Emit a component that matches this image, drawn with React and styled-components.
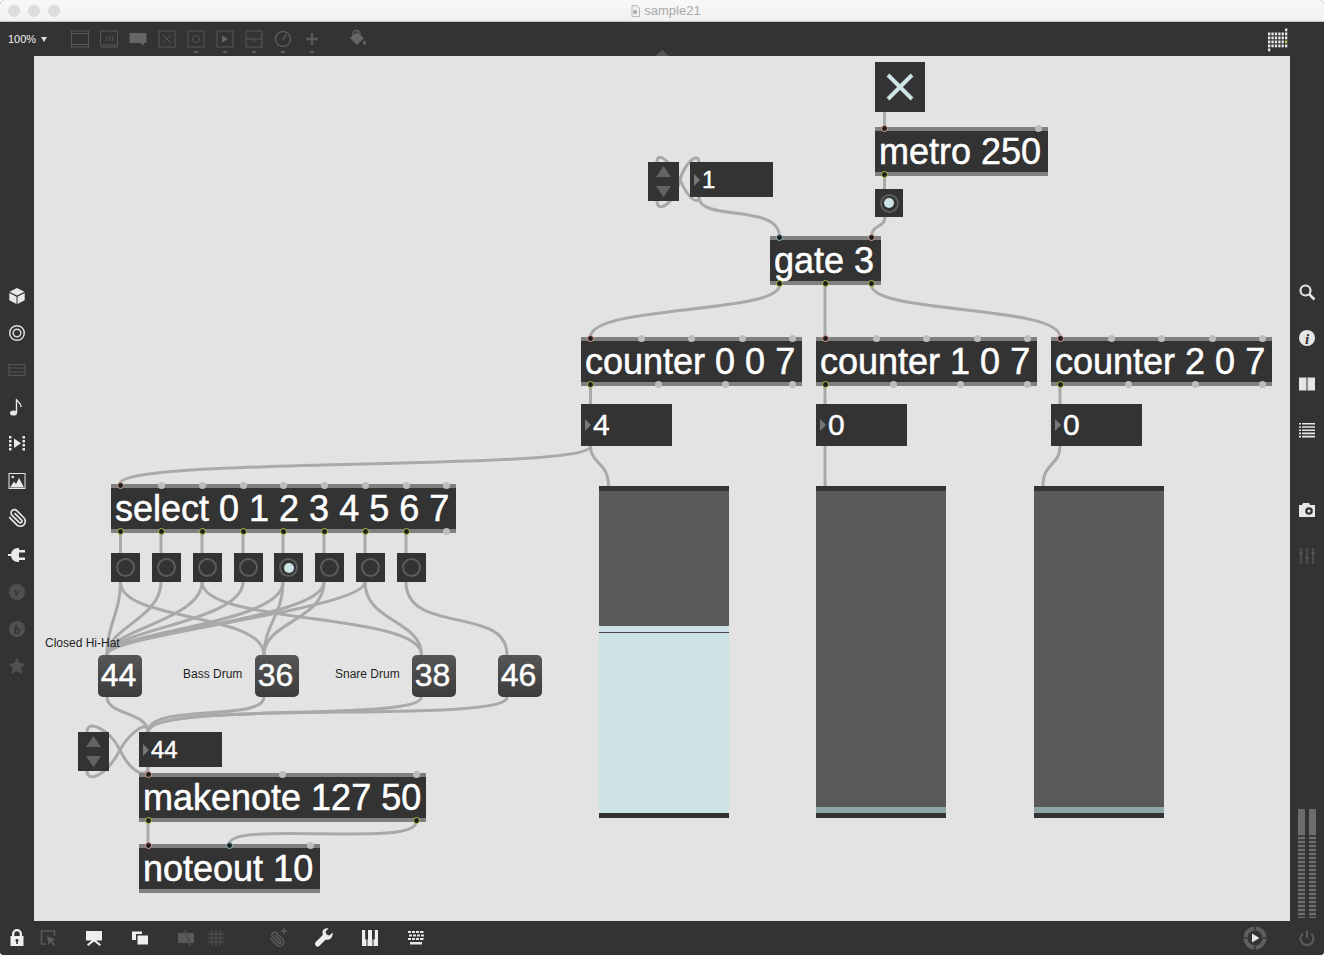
import React from "react";
import styled, { createGlobalStyle } from "styled-components";

const GlobalStyle = createGlobalStyle`
  html, body {
    margin: 0;
    background: #fff;
    font-family: "Liberation Sans", Arial, sans-serif;
  }
`;

// canvas origin in page coordinates, all nodes below are given in page coords
const OX = 34;
const OY = 56;

const CLIP = "m21.44 11.05-9.19 9.19a6 6 0 0 1-8.49-8.49l8.57-8.57A4 4 0 1 1 18 8.84l-8.59 8.57a2 2 0 0 1-2.83-2.83l8.49-8.48";

const DimLetter = styled.text`
  font-family: "Liberation Serif", serif;
  font-style: italic;
  font-weight: bold;
  font-size: 13px;
  fill: #333;
  stroke: none;
`;
const InfoLetter = styled(DimLetter)`
  font-size: 15px;
`;

const Glyph = ({ size = 20, children, ...rest }) => (
  <Svg width={size} height={size} viewBox="0 0 20 20" {...rest}>
    {children}
  </Svg>
);

const topTools = [
  { caret: false, icon: <><rect x="1.5" y="2" width="17" height="16" /><path d="M1.5 4.5h17M1.5 15.5h17" /></> },
  { caret: false, icon: <><rect x="1.5" y="2" width="17" height="14" /><path d="M7 12l1.5-5M10 12l1.5-5M13 12l1.5-5M1.5 18h17" /></> },
  { caret: false, icon: <path fill="#666" stroke="none" d="M1.5 4h17v10h-3v3l-3.5-3H1.5z" /> },
  { caret: false, icon: <><rect x="2" y="2" width="16" height="16" /><path d="M6 6l8 8M14 6l-8 8" /></> },
  { caret: true, icon: <><rect x="2" y="2" width="16" height="16" /><circle cx="10" cy="10" r="3.5" /></> },
  { caret: true, icon: <><rect x="2" y="2" width="16" height="16" /><path fill="#666" stroke="none" d="M7 6.5l6 3.5-6 3.5z" /></> },
  { caret: true, icon: <><rect x="2" y="2" width="16" height="16" /><path d="M2 10h16M10 10v3" /></> },
  { caret: true, icon: <><circle cx="10" cy="10" r="7.5" strokeWidth="1.5" /><path d="M10 10.5l3-5" strokeWidth="1.5" /></> },
  { caret: true, icon: <path strokeWidth="2.5" d="M10 4v12M4 10h12" /> },
];

const leftTools = [
  { tone: "#e8e8e8", icon: <path stroke="none" d="M10 2l7.5 3.7L10 9.4 2.5 5.7zM2.3 7l7.2 3.7V18l-7.2-3.7zM17.7 7l-7.2 3.7V18l7.2-3.7z" /> },
  { tone: "#dcdcdc", icon: <><circle cx="10" cy="10" r="7.3" fill="none" strokeWidth="1.5" /><circle cx="10" cy="10" r="3.8" fill="none" strokeWidth="1.5" /></> },
  { tone: "#555", icon: <><rect x="2" y="4.5" width="16" height="11" fill="none" strokeWidth="1.2" /><path d="M2 8h16M3 12h14" strokeWidth="1" /></> },
  { tone: "#e8e8e8", icon: <><ellipse cx="6.5" cy="16" rx="3.5" ry="2.6" stroke="none" /><path d="M9.5 16V2c.5 3 5 3.5 4.5 8" fill="none" strokeWidth="1.4" /></> },
  { tone: "#e8e8e8", icon: <path stroke="none" d="M2 2h2.5v2.5H2zM2 6h2.5v2.5H2zM2 10h2.5v2.5H2zM2 14h2.5v2.5H2zM15.5 2H18v2.5h-2.5zM15.5 6H18v2.5h-2.5zM15.5 10H18v2.5h-2.5zM15.5 14H18v2.5h-2.5zM7 4.5l7 4.8-7 4.8z" /> },
  { tone: "#e8e8e8", icon: <><rect x="2" y="2.5" width="16" height="15" fill="none" strokeWidth="1" /><circle cx="5.8" cy="6" r="1.3" stroke="none" /><path stroke="none" d="M3 16.5l4-6 2 2.5 3-6 5 9.5z" /></> },
  { tone: "#e8e8e8", icon: <g transform="translate(20 0) scale(-0.83 0.83)"><path fill="none" strokeWidth="2" d={CLIP} /></g> },
  { tone: "#eaeaea", icon: <path stroke="none" d="M1 9h3.5v2H1zM4 10c0-4 3-7 7-7h1v14h-1c-4 0-7-3-7-7zM12 5h6v2.5h-6zM12 12.5h6V15h-6z" /> },
  { tone: "#505050", icon: <><circle cx="10" cy="10" r="8" stroke="none" /><DimLetter x="10" y="14" textAnchor="middle">v</DimLetter></> },
  { tone: "#505050", icon: <><circle cx="10" cy="10" r="8" stroke="none" /><DimLetter x="10" y="15" textAnchor="middle">b</DimLetter></> },
  { tone: "#505050", icon: <path stroke="none" d="M10 1.5l2.6 5.6 6.1.7-4.5 4.2 1.2 6L10 15l-5.4 3 1.2-6-4.5-4.2 6.1-.7z" /> },
];

const rightTools = [
  { tone: "#e6e6e6", icon: <><circle cx="8.5" cy="8.5" r="5" fill="none" strokeWidth="2.2" /><path d="M12.5 12.5l5 5" strokeWidth="2.5" fill="none" /></> },
  { tone: "#e6e6e6", icon: <><circle cx="10" cy="10" r="8" stroke="none" /><InfoLetter x="10" y="15.5" textAnchor="middle">i</InfoLetter></> },
  { tone: "#e6e6e6", icon: <path stroke="none" d="M2 3.5h7.500v13H2zM10.500 3.500H18v13h-7.500z" /> },
  { tone: "#e6e6e6", icon: <path stroke="none" d="M2 3h2v1.6H2zM5 3h13v1.6H5zM2 6.2h2v1.6H2zM5 6.2h13v1.6H5zM2 9.4h2V11H2zM5 9.4h13V11H5zM2 12.6h2v1.6H2zM5 12.6h13v1.6H5zM2 15.8h2v1.6H2zM5 15.8h13v1.6H5z" /> },
  { tone: "#e6e6e6", spaced: true, icon: <><path stroke="none" fillRule="evenodd" d="M2 5h3l1-2h6l1 2h5v12H2zM12 7.2a3.8 3.8 0 1 0 0 7.6 3.8 3.8 0 0 0 0-7.6z" /><circle cx="12" cy="11" r="1.5" stroke="none" /></> },
  { tone: "#555", icon: <path strokeWidth="1.5" fill="none" d="M4 2v16M10 2v16M16 2v16M2 7h4M8 12h4M14 7h4" /> },
];

const bottomTools = [
  { after: 1, tone: "#eee", icon: <path stroke="none" fillRule="evenodd" d="M5 8V6a5 5 0 0 1 10 0v2h1.5v10h-13V8zM7.3 8h5.4V6a2.7 2.7 0 0 0-5.4 0zM10 11a1.5 1.5 0 0 0-.8 2.8V16h1.6v-2.200A1.5 1.5 0 0 0 10 11z" /> },
  { after: 16, tone: "#5a5a5a", icon: <><path fill="none" strokeWidth="1.6" d="M16.5 8V3h-13v13H8" /><path stroke="none" d="M9 8l8.5 3.5-3.5 1.5 3 4-1.5 1-3-4-2 2.5z" /></> },
  { after: 16, tone: "#eee", icon: <path stroke="none" d="M2 3h16v9.5h-5.8L17 16.5 15.8 18 10 13.5 4.2 18 3 16.5l4.8-4H2z" /> },
  { after: 16, tone: "#eee", icon: <path stroke="none" fillRule="evenodd" d="M2 3.5h10V6H6v6H2zM7.5 7.5H18v9H7.5z" /> },
  { after: 0, tone: "#5a5a5a", icon: <><path stroke="none" d="M2 5h7l3 10H2zM11 5h7v10h-4z" /><path strokeWidth="1.2" d="M9 2l5 16" /></> },
  { after: 32, tone: "#555", icon: <path strokeWidth="1" fill="none" d="M6 2v16M10 2v16M14 2v16M2 6h16M2 10h16M2 14h16" /> },
  { after: 16, tone: "#5a5a5a", icon: <><g transform="translate(17 3) scale(-0.68 0.68)"><path fill="none" strokeWidth="2.4" d={CLIP} /></g><path fill="none" strokeWidth="1.6" d="M16 0v6M13 3h6" /></> },
  { after: 16, tone: "#eee", icon: <path stroke="none" d="M18.5 4.5l-3 3-3-1-1-3 3-3c-3.5-.8-6.5 1.5-6 5 0 .7.1 1 .3 1.5L1.8 14a2.500 2.500 0 0 0 3.700 3.700l6.300-6.200c3.700 1.300 7.700-2 6.700-7z" /> },
  { after: 16, tone: "#eee", icon: <path stroke="none" d="M2 2h3.2v9.5h1.3V18H2zM7.5 11.5H8V2h4v9.5h.5V18h-5zM14.8 2H18v16h-4.500v-6.500h1.300z" /> },
  { after: 0, tone: "#e6e6e6", icon: <path stroke="none" d="M2 3h3v2H2zM6 3h3v2H6zM10 3h3v2h-3zM14 3h3.5v2H14zM3 6.5h3v2H3zM7 6.5h3v2H7zM11 6.5h3v2h-3zM15 6.5h3v2h-3zM2 10h3v2H2zM6 10h3v2H6zM10 10h3v2h-3zM14 10h3.5v2H14zM4 14h12v2.5H4z" /> },
];

const cords = [
  // top section
  "M884.5 112V127",
  "M884.5 176V189",
  "M885 217C885 228 871.5 224 871.5 237",
  "M699 197C699 222 779.5 203 779.5 237",
  "M657 201C657 212 672 208 680 180C684 165 698 150 699 162",
  "M699 197C699 204 690 202 680 180C672 163 657 150 657 162",
  "M779.5 285C779.5 314 590.5 305 590.5 337",
  "M825 285V337",
  "M871.5 285C871.5 314 1060 305 1060 337",
  "M590.5 386V404",
  "M825 386V404",
  "M1060 386V404",
  "M590.5 446C590.5 464 608.5 462 608.5 486",
  "M590.5 446C590.5 472 120 456 120 484",
  "M825 446V486",
  "M1060 446C1060 466 1043 462 1043 486",
  // select outlets to bangs
  "M120.5 533V553",
  "M161 533V553",
  "M202 533V553",
  "M243 533V553",
  "M283 533V553",
  "M324 533V553",
  "M365 533V553",
  "M406 533V553",
  // bangs to drums
  "M120.5 582C120.5 612 107 625 107 655",
  "M120.5 582C120.5 622 264 612 264 655",
  "M161 582C161 618 107 628 107 655",
  "M202 582C202 620 107 630 107 655",
  "M202 582C202 625 421.5 612 421.5 655",
  "M243 582C243 622 107 630 107 655",
  "M283 582C283 625 107 632 107 655",
  "M283 582C283 615 264 625 264 655",
  "M324 582C324 620 107 632 107 655",
  "M324 582C324 620 264 622 264 655",
  "M365 582C365 610 107 634 107 655",
  "M365 582C365 622 421.5 620 421.5 655",
  "M406 582C406 635 507 605 507 655",
  // drums to number
  "M107 697C107 715 148 712 148 732",
  "M264 697C264 722 148 703 148 732",
  "M421.5 697C421.5 722 148 702 148 732",
  "M507 697C507 725 148 698 148 732",
  // inc/dec loop with the 44 box
  "M87 771C87 782 105 778 120 750C128 735 148 718 148 732",
  "M148 767C148 778 132 775 120 750C110 730 87 718 87 732",
  "M148 767V773",
  "M148 822V844",
  "M416 822C416 848 229.5 820 229.5 844",
];

const selectBangs = [111, 152, 193, 234, 274, 315, 356, 397];
const drums = [
  { x: 98, value: 44 },
  { x: 255, value: 36 },
  { x: 412, value: 38 },
  { x: 498, value: 46 },
];
const labels = [
  { x: 45, y: 636, text: "Closed Hi-Hat" },
  { x: 183, y: 667, text: "Bass Drum" },
  { x: 335, y: 667, text: "Snare Drum" },
];

function MaxObject({ x, y, w, text, inlets = [], outlets = [] }) {
  return (
    <ObjectBox $x={x} $y={y} $w={w}>
      {text}
      {inlets.map(([px, kind]) => (
        <Port key={px} $top $kind={kind} style={{ left: px - x - 3.5 }} />
      ))}
      {outlets.map(([px, kind]) => (
        <Port key={px} $kind={kind} style={{ left: px - x - 3.5 }} />
      ))}
    </ObjectBox>
  );
}

function IncDec({ x, y }) {
  return (
    <IncDecBox $x={x} $y={y}>
      <svg width="31" height="39" viewBox="0 0 31 39">
        <path fill="#636363" d="M15.5 4L23 15H8zM8 24h15l-7.5 11z" />
      </svg>
    </IncDecBox>
  );
}

function Number({ x, y, w, h, size, value }) {
  return (
    <NumberBox $x={x} $y={y} $w={w} $h={h} $size={size}>
      <Arrow />
      {value}
    </NumberBox>
  );
}

function Bang({ x, y, w = 29, lit }) {
  return (
    <BangBox $x={x} $y={y} $w={w}>
      <Ring>{lit && <Dot />}</Ring>
    </BangBox>
  );
}

function MultiSlider({ x, fill, marker }) {
  return (
    <Slider $x={x}>
      <Track>
        <Fill $marker={marker} style={{ height: fill }} />
      </Track>
    </Slider>
  );
}

function App() {
  return (
    <>
      <GlobalStyle />
      <Win>
        <TitleBar>
          <Lights>
            <Light />
            <Light />
            <Light />
          </Lights>
          <DocTitle>
            <svg width="11" height="12" viewBox="0 0 11 12">
              <path d="M2 .5h5l2.5 3v8H2z" fill="#eee" stroke="#bbb" />
              <circle cx="5" cy="7" r="2" fill="#aaa" />
            </svg>
            sample21
          </DocTitle>
        </TitleBar>

        <TopBar>
          <Zoom>
            100%
            <ZoomCaret />
          </Zoom>
          {topTools.map((tool, i) => (
            <TopSlot key={i}>
              <Outline size={20}>{tool.icon}</Outline>
              {tool.caret && <SlotCaret />}
            </TopSlot>
          ))}
          <BucketSlot>
            <Glyph size={20} color="#666">
              <path fill="none" strokeWidth="1.3" d="M6 8V5a3.5 3.5 0 0 1 7 0v3" />
              <path stroke="none" d="M10 3l7 6-7 7-7-7zM17.5 11c1 1.5 1.5 2.5 1.5 3.3a1.5 1.5 0 0 1-3 0c0-.8.5-1.8 1.5-3.3z" />
            </Glyph>
          </BucketSlot>
          <Notch />
          <GridMark>
            <svg width="24" height="26" viewBox="0 0 24 26">
              {[0, 1, 2, 3].flatMap((r) =>
                [0, 1, 2, 3, 4, 5].map((c) => (
                  <rect
                    key={r + "-" + c}
                    x={1 + c * 3.4}
                    y={4.5 + r * 4}
                    width="2.3"
                    height="2.8"
                    fill={r === 2 && c === 5 ? "#c5c24a" : "#e8e8e8"}
                  />
                ))
              )}
              <rect x="18" y="0.5" width="2.3" height="2.8" fill="#e8e8e8" />
              <rect x="1" y="20.5" width="2.3" height="2.8" fill="#e8e8e8" />
            </svg>
          </GridMark>
        </TopBar>

        <Middle>
          <LeftBar>
            {leftTools.map((tool, i) => (
              <LeftSlot key={i}>
                <Glyph color={tool.tone}>{tool.icon}</Glyph>
              </LeftSlot>
            ))}
          </LeftBar>

          <Canvas>
            <Cords viewBox={`${OX} ${OY} 1256 865`} width="1256" height="865">
              {cords.map((d, i) => (
                <path key={i} d={d} />
              ))}
            </Cords>

            <ToggleBox $x={875} $y={62}>
              <svg width="50" height="50" viewBox="0 0 50 50">
                <path d="M13 13l24 24M37 13L13 37" stroke="#cde3e5" strokeWidth="4" />
              </svg>
            </ToggleBox>
            <MaxObject x={875} y={127} w={173} text="metro 250" inlets={[[884.5, "in"], [1038, "free"]]} outlets={[[884.5, "out"]]} />
            <Bang x={875} y={189} w={28} lit />
            <IncDec x={648} y={162} />
            <Number x={690} y={162} w={83} h={35} size={24} value="1" />
            <MaxObject x={770} y={236} w={111} text="gate 3" inlets={[[779.5, "cold"], [871.5, "in"]]} outlets={[[779.5, "out"], [825, "out"], [871.5, "out"]]} />

            <MaxObject x={581} y={337} w={221} text="counter 0 0 7"
              inlets={[[590.5, "in"], [641, "free"], [691, "free"], [742, "free"], [792, "free"]]}
              outlets={[[590.5, "out"], [658, "free"], [725, "free"], [792, "free"]]} />
            <MaxObject x={816} y={337} w={221} text="counter 1 0 7"
              inlets={[[825.5, "in"], [876, "free"], [926, "free"], [977, "free"], [1027, "free"]]}
              outlets={[[825.5, "out"], [893, "free"], [960, "free"], [1027, "free"]]} />
            <MaxObject x={1051} y={337} w={221} text="counter 2 0 7"
              inlets={[[1060.5, "in"], [1111, "free"], [1161, "free"], [1212, "free"], [1262, "free"]]}
              outlets={[[1060.5, "out"], [1128, "free"], [1195, "free"], [1262, "free"]]} />

            <Number x={581} y={404} w={91} h={42} size={30} value="4" />
            <Number x={816} y={404} w={91} h={42} size={30} value="0" />
            <Number x={1051} y={404} w={91} h={42} size={30} value="0" />

            <MultiSlider x={599} fill={187} marker />
            <MultiSlider x={816} fill={6} />
            <MultiSlider x={1034} fill={6} />

            <MaxObject x={111} y={484} w={345} text="select 0 1 2 3 4 5 6 7"
              inlets={[[120.5, "in"], [161, "free"], [202, "free"], [243, "free"], [283, "free"], [324, "free"], [365, "free"], [406, "free"], [446, "free"]]}
              outlets={[[120.5, "out"], [161, "out"], [202, "out"], [243, "out"], [283, "out"], [324, "out"], [365, "out"], [406, "out"], [446, "free"]]} />
            {selectBangs.map((x, i) => (
              <Bang key={x} x={x} y={553} lit={i === 4} />
            ))}

            {labels.map((l) => (
              <Label key={l.text} $x={l.x} $y={l.y}>
                {l.text}
              </Label>
            ))}
            {drums.map((d) => (
              <Message key={d.x} $x={d.x}>
                {d.value}
              </Message>
            ))}

            <IncDec x={78} y={732} />
            <Number x={139} y={732} w={83} h={35} size={24} value="44" />
            <MaxObject x={139} y={773} w={287} text="makenote 127 50"
              inlets={[[148, "in"], [282, "free"], [416, "free"]]}
              outlets={[[148, "out"], [416, "out"]]} />
            <MaxObject x={139} y={844} w={181} text="noteout 10"
              inlets={[[148, "in"], [229.5, "cold"], [310, "free"]]} />
          </Canvas>

          <RightBar>
            {rightTools.map((tool, i) => (
              <RightSlot key={i} $spaced={tool.spaced}>
                <Glyph color={tool.tone}>{tool.icon}</Glyph>
              </RightSlot>
            ))}
            <Meter>
              <MeterStrip />
              <MeterStrip />
            </Meter>
          </RightBar>
        </Middle>

        <BottomBar>
          {bottomTools.map((tool, i) => (
            <BottomSlot key={i} $after={tool.after}>
              <Glyph color={tool.tone}>{tool.icon}</Glyph>
            </BottomSlot>
          ))}
          <BottomRight>
            <svg width="26" height="26" viewBox="0 0 26 26">
              <circle cx="13" cy="13" r="9.5" fill="none" stroke="#5f5f5f" strokeWidth="4" />
              <path d="M13 0v5M13 21v5M0 13h5M21 13h5" stroke="#333" strokeWidth="1.5" />
              <path d="M10 8.5l7.5 4.5-7.5 4.5z" fill="#e6e6e6" />
            </svg>
            <svg width="20" height="20" viewBox="0 0 20 20">
              <path d="M6 5.5a6.500 6.500 0 1 0 8 0M10 2.500v7.500" fill="none" stroke="#5a5a5a" strokeWidth="2.2" />
            </svg>
          </BottomRight>
        </BottomBar>
      </Win>
    </>
  );
}

const Win = styled.div`
  width: 1324px;
  height: 955px;
  display: flex;
  flex-direction: column;
  border-radius: 5px 5px 4px 4px;
  overflow: hidden;
  background: #333;
`;
const TitleBar = styled.div`
  height: 21px;
  flex: none;
  position: relative;
  display: flex;
  align-items: center;
  justify-content: center;
  background: linear-gradient(#f8f8f8, #f1f1f1);
  border-bottom: 1px solid #c4c4c4;
`;
const Lights = styled.div`
  position: absolute;
  left: 8px;
  top: 5px;
  display: flex;
  gap: 8px;
`;
const Light = styled.span`
  width: 12px;
  height: 12px;
  border-radius: 50%;
  background: #dcdcdc;
`;
const DocTitle = styled.div`
  display: flex;
  align-items: center;
  gap: 3px;
  margin-left: 7px;
  font-size: 13px;
  color: #ababab;
`;
const TopBar = styled.div`
  height: 34px;
  flex: none;
  position: relative;
  display: flex;
  align-items: stretch;
  background: #333;
`;
const Zoom = styled.div`
  width: 65px;
  padding-left: 8px;
  box-sizing: border-box;
  display: flex;
  align-items: center;
  gap: 5px;
  font-size: 11px;
  color: #f0f0f0;
`;
const ZoomCaret = styled.span`
  width: 0;
  height: 0;
  border-left: 3px solid transparent;
  border-right: 3px solid transparent;
  border-top: 5px solid #ddd;
`;
const TopSlot = styled.div`
  position: relative;
  width: 29px;
  display: flex;
  align-items: center;
  justify-content: center;
`;
const SlotCaret = styled.span`
  position: absolute;
  left: 50%;
  bottom: 2px;
  margin-left: -3px;
  border-left: 3px solid transparent;
  border-right: 3px solid transparent;
  border-top: 3px solid #5c5c5c;
`;
const BucketSlot = styled(TopSlot)`
  margin-left: 16px;
`;
const Notch = styled.span`
  position: absolute;
  left: 655px;
  bottom: 0;
  border-left: 7px solid transparent;
  border-right: 7px solid transparent;
  border-bottom: 6px solid #555;
`;
const GridMark = styled.div`
  margin-left: auto;
  margin-right: 33px;
  padding-top: 6px;
  & svg {
    display: block;
  }
`;
const Middle = styled.div`
  flex: 1;
  display: flex;
  min-height: 0;
`;
const LeftBar = styled.div`
  width: 34px;
  flex: none;
  box-sizing: border-box;
  padding-top: 221px;
  display: flex;
  flex-direction: column;
  background: #333;
`;
const LeftSlot = styled.div`
  height: 37px;
  flex: none;
  display: flex;
  align-items: center;
  justify-content: center;
`;
const RightBar = styled.div`
  width: 34px;
  flex: none;
  box-sizing: border-box;
  padding: 213px 0 3px;
  display: flex;
  flex-direction: column;
  background: #333;
`;
const RightSlot = styled.div`
  height: 46px;
  flex: none;
  margin-top: ${(p) => (p.$spaced ? "34px" : "0")};
  display: flex;
  align-items: center;
  justify-content: center;
`;
const Meter = styled.div`
  margin-top: auto;
  margin-left: 8px;
  height: 109px;
  display: flex;
  gap: 4px;
`;
const MeterStrip = styled.div`
  width: 7px;
  background:
    linear-gradient(#6c6c6c, #6c6c6c) top / 100% 24px no-repeat,
    repeating-linear-gradient(#6f6f6f 0 2.5px, #3f3f3f 2.5px 4px);
`;
const BottomBar = styled.div`
  height: 34px;
  flex: none;
  display: flex;
  align-items: center;
  padding-left: 2px;
  background: #333;
`;
const BottomSlot = styled.div`
  width: 30px;
  flex: none;
  margin-right: ${(p) => p.$after}px;
  display: flex;
  align-items: center;
  justify-content: center;
`;
const BottomRight = styled.div`
  margin-left: auto;
  margin-right: 7px;
  display: flex;
  align-items: center;
  gap: 29px;
  & svg {
    display: block;
  }
`;
const Svg = styled.svg`
  display: block;
  color: ${(p) => p.color || "inherit"};
  fill: currentColor;
  stroke: currentColor;
`;
const Outline = styled(Glyph)`
  fill: none;
  stroke: #585858;
  stroke-width: 1;
`;
const Canvas = styled.div`
  flex: 1;
  position: relative;
  background: #e3e3e3;
  overflow: hidden;
`;
const Cords = styled.svg`
  position: absolute;
  left: 0;
  top: 0;
  fill: none;
  stroke: #a9a9a9;
  stroke-width: 3;
`;
const Node = styled.div`
  position: absolute;
  left: ${(p) => p.$x - OX}px;
  top: ${(p) => p.$y - OY}px;
  box-sizing: border-box;
  background: #333;
  color: #fff;
`;
const ObjectBox = styled(Node)`
  width: ${(p) => p.$w}px;
  height: 49px;
  padding-left: 4px;
  border-top: 4px solid #808080;
  border-bottom: 4px solid #808080;
  font-size: 36px;
  line-height: 41px;
  white-space: nowrap;
  -webkit-text-stroke: 0.5px #fff;
`;
const portColors = { in: "#e0a096", cold: "#8cc0d0", out: "#b4c44c" };
const Port = styled.span`
  position: absolute;
  ${(p) => (p.$top ? "top: -6px;" : "bottom: -6px;")}
  width: 7px;
  height: 7px;
  box-sizing: border-box;
  border-radius: 50%;
  background: ${(p) => (p.$kind === "free" ? "#bdbdbd" : "#1f1f1f")};
  border: ${(p) => (p.$kind === "free" ? "none" : `1.5px solid ${portColors[p.$kind]}`)};
`;
const ToggleBox = styled(Node)`
  width: 50px;
  height: 50px;
  & svg {
    display: block;
  }
`;
const BangBox = styled(Node)`
  width: ${(p) => p.$w}px;
  height: ${(p) => p.$w}px;
  display: flex;
  align-items: center;
  justify-content: center;
`;
const Ring = styled.div`
  width: 19px;
  height: 19px;
  box-sizing: border-box;
  border-radius: 50%;
  border: 2px solid #5c5c5c;
  display: flex;
  align-items: center;
  justify-content: center;
`;
const Dot = styled.div`
  width: 10px;
  height: 10px;
  border-radius: 50%;
  background: #cde3e5;
`;
const IncDecBox = styled(Node)`
  width: 31px;
  height: 39px;
  & svg {
    display: block;
  }
`;
const NumberBox = styled(Node)`
  width: ${(p) => p.$w}px;
  height: ${(p) => p.$h}px;
  display: flex;
  align-items: center;
  padding-left: 4px;
  font-size: ${(p) => p.$size}px;
  -webkit-text-stroke: 0.4px #fff;
`;
const Arrow = styled.span`
  width: 0;
  height: 0;
  border-top: 6px solid transparent;
  border-bottom: 6px solid transparent;
  border-left: 6px solid #777;
  margin-right: 2px;
`;
const Slider = styled(Node)`
  top: ${486 - OY}px;
  width: 130px;
  height: 332px;
  padding: 5px 0;
`;
const Track = styled.div`
  height: 100%;
  display: flex;
  flex-direction: column;
  justify-content: flex-end;
  background: #595959;
`;
const Fill = styled.div`
  box-sizing: border-box;
  background: ${(p) =>
    p.$marker
      ? "linear-gradient(#cde3e5 0 6px, #444 6px 7px, #cde3e5 7px)"
      : "#8fa6a7"};
`;
const Message = styled(Node)`
  top: ${655 - OY}px;
  width: 44px;
  height: 42px;
  padding: 0 3px 2px 0;
  border-radius: 5px;
  background: linear-gradient(#565656, #3c3c3c);
  display: flex;
  align-items: center;
  justify-content: center;
  font-size: 32px;
  -webkit-text-stroke: 0.4px #fff;
`;
const Label = styled.div`
  position: absolute;
  left: ${(p) => p.$x - OX}px;
  top: ${(p) => p.$y - OY}px;
  font-size: 12px;
  line-height: 14px;
  color: #1f1f1f;
  white-space: nowrap;
`;

export default App;
